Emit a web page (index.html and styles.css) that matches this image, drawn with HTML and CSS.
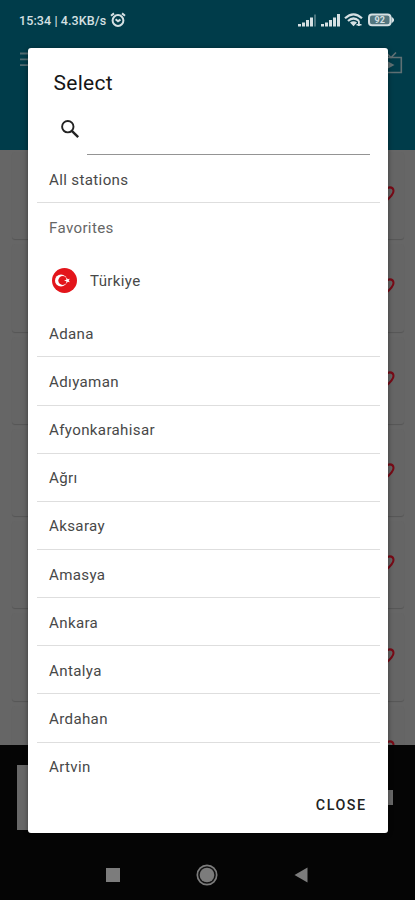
FILE: index.html
```html
<!DOCTYPE html>
<html lang="en">
<head>
<meta charset="utf-8">
<meta name="viewport" content="width=device-width, initial-scale=1">
<title>Select</title>
<link rel="stylesheet" href="styles.css">
</head>
<body>
<svg class="defs" width="0" height="0">
  <symbol id="heart" viewBox="0 0 24 24"><path d="M12 20.5C5 14.5 3 12 3 8.5 3 5.800 5 4 7.500 4 9.300 4 11 5 12 6.600 13 5 14.700 4 16.500 4 19 4 21 5.800 21 8.500 21 12 19 14.500 12 20.500Z" fill="none" stroke="#780a16" stroke-width="2.500"/></symbol>
</svg>
<div class="screen">
  <header class="status">
    <span class="clock">15:34 | 4.3KB/s</span>
    <svg class="alarm" width="16" height="16" viewBox="0 0 16 16" fill="none" stroke="#d5e0e3" stroke-width="2"><circle cx="8" cy="8.500" r="5.400"/><path d="M1 3.800 4 1.400M15 3.800 12 1.400M5.600 7.300 8 9.200 10.500 7.600"/></svg>
    <svg class="signals" width="98" height="16" viewBox="0 0 98 16" fill="#d5e0e3">
      <path d="M0 12h3v2.500H0zM4 10.500h3v4H4zM8 8h3v6.500H8zM12 5.500h3v9h-3z"/><path d="M16 2.500h2v12h-2z" opacity=".35"/>
      <path d="M23 12h3v2.500h-3zM27 10.500h3v4h-3zM31 8h3v6.500h-3zM35 5.500h3v9h-3zM39 2h3v12.500h-3z"/>
      <g fill="none" stroke="#d5e0e3" stroke-width="2.200"><path d="M47 6.200Q55.500-1.600 64 6.200M50 9Q55.500 4 61 9"/></g>
      <path d="M52 10.500Q55.500 8 59 10.500L55.500 14.300ZM60 9h1.800v5H60zM58.500 12h5v1.500h-5z"/>
      <rect x="71" y="2.500" width="21.500" height="10.800" rx="3" fill="#53767f" stroke="#d5e0e3" stroke-width="2"/><path d="M93.500 4.500 96 7v2l-2.500 2.500z"/>
      <text class="charge" x="81.700" y="11.200" text-anchor="middle">92</text>
    </svg>
  </header>
  <div class="toolbar">
    <svg width="18" height="16" viewBox="0 0 18 16" stroke="#526b71" stroke-width="1.800"><path d="M0 2.500h18M0 8.300h18M0 14.200h18"/></svg>
    <svg width="24" height="24" viewBox="0 0 24 24" fill="none" stroke="#5f7074" stroke-width="1.600"><path d="M1.500 6.500h20.800v15H1.500zM7 1.500l5 5 5-5"/><path d="M9 10.500l6.500 3.500L9 17.500z" fill="#5f7074" stroke="none"/></svg>
  </div>
  <main class="stations">
    <div class="card"><svg><use href="#heart"/></svg></div>
    <div class="card"><svg><use href="#heart"/></svg></div>
    <div class="card"><svg><use href="#heart"/></svg></div>
    <div class="card"><svg><use href="#heart"/></svg></div>
    <div class="card"><svg><use href="#heart"/></svg></div>
    <div class="card"><svg><use href="#heart"/></svg></div>
    <div class="card"><svg><use href="#heart"/></svg></div>
  </main>
  <div class="banner"><span class="art"></span><span class="chip"></span></div>
  <nav class="nav">
    <svg width="14" height="14"><rect width="14" height="14" fill="#7c7c7c"/></svg>
    <svg width="22" height="22" viewBox="0 0 22 22"><circle cx="11" cy="11" r="9.700" fill="#111" stroke="#7c7c7c" stroke-width="1.700"/><circle cx="11" cy="11" r="7.300" fill="#7c7c7c"/></svg>
    <svg width="14" height="16" viewBox="0 0 14 16"><path d="M0.500 8 13.500.5v15z" fill="#7c7c7c"/></svg>
  </nav>
</div>
<section class="dialog" role="dialog">
  <h1>Select</h1>
  <div class="search">
    <svg width="20" height="20" viewBox="0 0 20 20" fill="none" stroke="#222"><circle cx="7.800" cy="7.700" r="5.700" stroke-width="1.900"/><path d="M11.800 11.800l6.400 6.300" stroke-width="2.400"/></svg>
    <span class="field"></span>
  </div>
  <ul class="list">
    <li>All stations</li>
    <li class="plain faint">Favorites</li>
    <li class="plain country">
      <svg width="25" height="25" viewBox="0 0 25 25"><circle cx="12.500" cy="12.500" r="12.500" fill="#e3151b"/><circle cx="9" cy="12.500" r="6" fill="#fff"/><circle cx="10.700" cy="12.500" r="4.400" fill="#e3151b"/><path d="M12 12.500l2.400-.8V9.600l1.400 1.700 2-.5-1.100 1.700 1.100 1.700-2-.5-1.400 1.700v-2.100z" fill="#fff"/></svg>
      <span>Türkiye</span>
    </li>
    <li>Adana</li>
    <li>Adıyaman</li>
    <li>Afyonkarahisar</li>
    <li>Ağrı</li>
    <li>Aksaray</li>
    <li>Amasya</li>
    <li>Ankara</li>
    <li>Antalya</li>
    <li>Ardahan</li>
    <li class="plain">Artvin</li>
  </ul>
  <div class="close">CLOSE</div>
</section>
</body>
</html>
```
FILE: styles.css
```css
* { box-sizing: border-box; }
body { margin: 0; font-family: Roboto, "Liberation Sans", sans-serif; }
svg { display: block; flex: none; }
.defs { position: absolute; }
.screen { height: 900px; overflow: hidden; display: flex; flex-direction: column; background: #050505; }
.status { height: 40px; flex: none; display: flex; align-items: center; padding: 0 19px; background: #003c4a; }
.clock { font-size: 12.500px; font-weight: 500; color: #d5e0e3; width: 91px; letter-spacing: .1px; white-space: nowrap; }
.alarm { margin-top: -1px; }
.signals { margin-left: auto; }
.charge { font-size: 9px; font-weight: 700; }
.toolbar { height: 110px; flex: none; display: flex; justify-content: space-between; align-items: flex-start; padding: 11px 12px 0 20px; background: #003c4a; }
.stations { height: 595px; flex: none; overflow: hidden; background: #666; padding: 2px 11px 0 12px; }
.card { height: 87.300px; margin-bottom: 5px; display: flex; justify-content: flex-end; align-items: center; padding-right: 8px; border-radius: 3px; background: #656565; box-shadow: 0 1px 1px rgba(0,0,0,.16); }
.card svg { width: 20px; height: 20px; margin-top: -3px; }
.banner { height: 105px; flex: none; padding: 20px 22px 0 17px; display: flex; justify-content: space-between; }
.art { width: 80px; height: 65px; background: #686868; }
.chip { width: 30px; height: 15px; margin-top: 25px; background: #686868; }
.nav { height: 50px; flex: none; display: flex; justify-content: space-between; align-items: center; padding: 0 107px 0 106px; }
.dialog { position: absolute; left: 28px; top: 48px; width: 360px; height: 785px; border-radius: 3px; background: #fff; box-shadow: 0 1px 5px rgba(0,0,0,.45); display: flex; flex-direction: column; }
h1 { margin: 0; padding: 22px 0 0 25.500px; height: 61px; font-size: 21px; line-height: 26px; font-weight: 400; letter-spacing: .3px; color: #161616; }
.search { height: 46px; display: flex; padding: 10px 18px 0 32px; }
.field { flex: 1; height: 36px; margin-left: 7px; border-bottom: 1px solid #949494; }
.list { margin: 0; padding: 0 8px 0 9px; list-style: none; height: 630px; overflow: hidden; }
li { height: 48.150px; display: flex; align-items: center; padding: 2px 0 0 12px; border-bottom: 1px solid #dedede; font-size: 15.100px; letter-spacing: .35px; color: #484848; }
li.plain { border-bottom-color: transparent; }
.faint { color: #666; }
.country { height: 58px; padding: 1px 0 0 12px; }
.country svg { margin-left: 3px; }
.country span { margin: 1px 0 0 13px; }
.close { padding: 10px 21.500px 0 0; text-align: right; font-size: 14.300px; line-height: 20px; font-weight: 500; letter-spacing: 1.500px; color: #222; }
```
